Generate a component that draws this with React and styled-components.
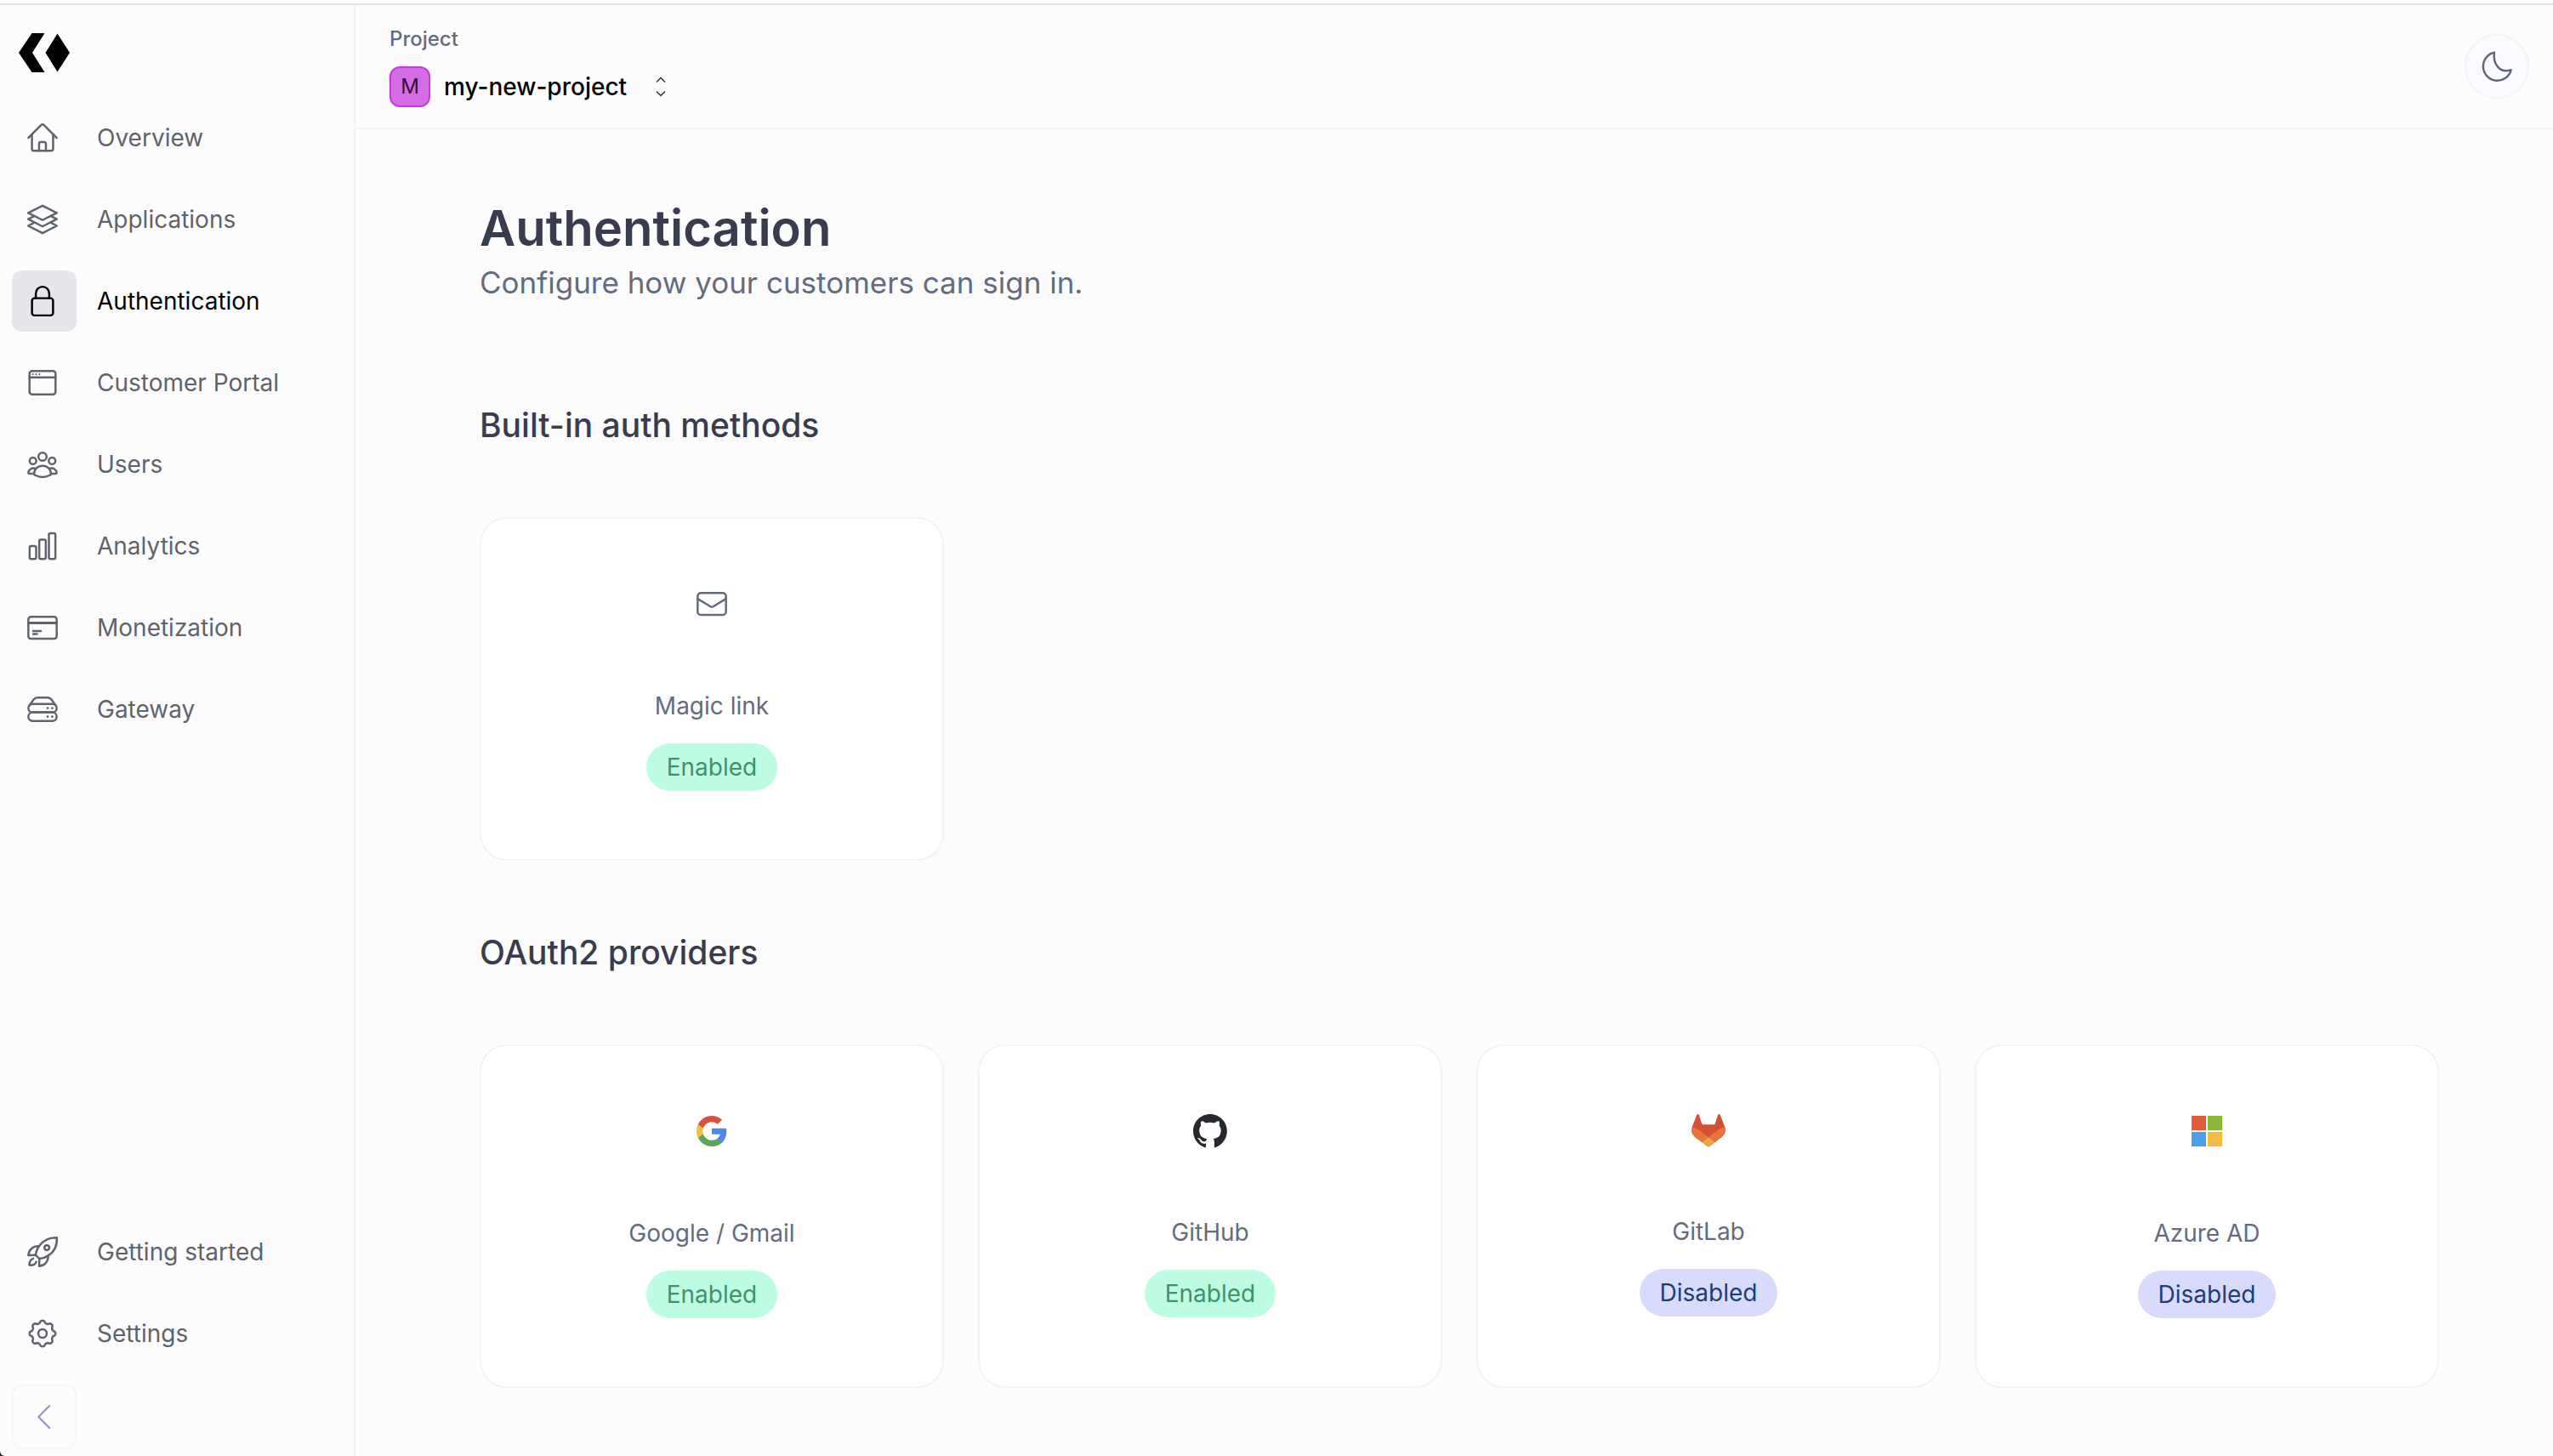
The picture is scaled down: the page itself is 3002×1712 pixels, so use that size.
import React from "react";
import styled, { createGlobalStyle } from "styled-components";

const color = {
  canvas: "#fcfcfc",
  line: "#f2f2f8",
  nav: "#5f636b",
  heading: "#393b4e",
  muted: "#636c7e",
};

const GlobalStyle = createGlobalStyle`
  *, *::before, *::after { box-sizing: border-box; }
  html { background: #1c2b4a; }
  body {
    margin: 0;
    font-family: Inter, "Liberation Sans", sans-serif;
    font-size: 28px;
    line-height: 40px;
  }
  h1, h2, p { margin: 0; }
  button { font: inherit; color: inherit; cursor: pointer; }
  svg { display: block; flex: none; overflow: visible; }
`;

const Window = styled.div`
  display: flex;
  flex-direction: column;
  min-height: 100vh;
  background: ${color.canvas};
  border-bottom-left-radius: 6px;
`;

const WindowEdge = styled.div`
  height: 6px;
  background: #ffffff;
  border-bottom: 2px solid #e0e0e0;
`;

const Shell = styled.div`
  flex: 1;
  display: flex;
`;

const Sidebar = styled.aside`
  flex: none;
  width: 418px;
  display: flex;
  flex-direction: column;
  padding: 32px 14px 8px;
  border-right: 2px solid ${color.line};
`;

const LogoLink = styled.a`
  display: flex;
  align-items: center;
  height: 48px;
  padding: 0 8px;
  margin-bottom: 40px;
  color: #000000;
`;

const Nav = styled.nav`
  display: flex;
  flex-direction: column;
  gap: 24px;
`;

const SidebarFooter = styled.div`
  display: flex;
  flex-direction: column;
  gap: 24px;
  margin-top: auto;
`;

const NavLink = styled.a`
  display: flex;
  align-items: center;
  gap: 24px;
  color: ${(p) => (p.$active ? "#000000" : color.nav)};
  text-decoration: none;
`;

const NavIcon = styled.span`
  display: flex;
  align-items: center;
  justify-content: center;
  width: 76px;
  height: 72px;
  padding-right: 4px;
  border-radius: 12px;
  background: ${(p) => (p.$active ? "#e5e7eb" : "transparent")};
`;

const CollapseButton = styled.button`
  display: flex;
  align-items: center;
  justify-content: center;
  width: 76px;
  height: 76px;
  padding: 0;
  border: 2px solid #f4f4fa;
  border-radius: 12px;
  background: transparent;
  color: #9296c2;
`;

const Main = styled.main`
  flex: 1;
  min-width: 0;
`;

const Header = styled.header`
  display: flex;
  align-items: center;
  justify-content: space-between;
  padding: 24px 28px 24px 40px;
  border-bottom: 2px solid ${color.line};
`;

const ProjectPicker = styled.div`
  display: flex;
  flex-direction: column;
  gap: 16px;
`;

const PickerLabel = styled.span`
  font-size: 24px;
  line-height: 32px;
  font-weight: 500;
  color: ${color.muted};
`;

const PickerButton = styled.button`
  display: flex;
  align-items: center;
  gap: 16px;
  padding: 0;
  border: 0;
  background: transparent;
  font-weight: 500;
  color: #000000;
`;

const Avatar = styled.span`
  display: flex;
  align-items: center;
  justify-content: center;
  width: 48px;
  height: 48px;
  border: 2px solid #c739de;
  border-radius: 12px;
  background: #d56ce6;
  font-size: 24px;
  font-weight: 400;
  color: #34103d;
`;

const PickerName = styled.span`
  padding-right: 16px;
`;

const ThemeButton = styled.button`
  display: flex;
  align-items: center;
  justify-content: center;
  width: 76px;
  height: 76px;
  padding: 0;
  border: 2px solid ${color.line};
  border-radius: 50%;
  background: #fbfaff;
  color: #5f6878;
`;

const Content = styled.div`
  padding: 80px 134px 80px 146px;
`;

const Title = styled.h1`
  font-size: 58px;
  line-height: 72px;
  font-weight: 600;
  color: ${color.heading};
`;

const Subtitle = styled.p`
  margin-bottom: 112px;
  font-size: 35px;
  line-height: 56px;
  color: ${color.muted};
`;

const Section = styled.section`
  & + & {
    margin-top: 80px;
  }
`;

const SectionTitle = styled.h2`
  margin-bottom: 80px;
  font-size: 39px;
  line-height: 56px;
  font-weight: 500;
  color: ${color.heading};
`;

const CardGrid = styled.div`
  display: grid;
  grid-template-columns: repeat(4, 1fr);
  gap: 40px;
`;

const Card = styled.button`
  display: flex;
  flex-direction: column;
  align-items: center;
  justify-content: center;
  height: 404px;
  border: 2px solid ${color.line};
  border-radius: 32px;
  background: #ffffff;
  color: ${color.muted};
`;

const CardIcon = styled.span`
  display: flex;
  align-items: center;
  height: ${(p) => p.$height}px;
  margin-bottom: 80px;
`;

const CardName = styled.span`
  margin-bottom: 24px;
`;

const Badge = styled.span`
  padding: 8px 24px;
  border-radius: 28px;
  background: ${(p) => (p.$enabled ? "#bdfde4" : "#d9dbfc")};
  color: ${(p) => (p.$enabled ? "#40916c" : "#1c3d78")};
`;

function LineIcon({ children, size = 36, width = 1.65 }) {
  return (
    <svg
      width={size}
      height={size}
      viewBox="0 0 24 24"
      fill="none"
      stroke="currentColor"
      strokeWidth={width}
      strokeLinecap="round"
      strokeLinejoin="round"
      aria-hidden="true"
    >
      {children}
    </svg>
  );
}

const Logo = () => (
  <svg width="60" height="46" viewBox="0 0 60 46" fill="currentColor" aria-hidden="true">
    <path d="M0 23 15.500 0h15L16 23l14.500 23h-15Z" />
    <path d="M31.500 23 45.500.500 60 23 45.500 45.500Z" />
  </svg>
);

const HomeIcon = () => (
  <LineIcon>
    <path d="M.9 12.100 11 1.900a1.400 1.400 0 0 1 2 0l10.100 10.200" />
    <path d="M3.700 9.400v11.300a1.500 1.500 0 0 0 1.500 1.500h13.600a1.500 1.500 0 0 0 1.500-1.500V9.400" />
    <path d="M9.300 22.200v-5.400a1.400 1.400 0 0 1 1.400-1.400h2.600a1.400 1.400 0 0 1 1.400 1.400v5.400" />
  </LineIcon>
);

const LayersIcon = () => (
  <LineIcon>
    <path d="M12 1.300 23.200 6.900 12 12.500.8 6.900Z" />
    <path d="M4.800 9.700.8 11.800 12 17.500l11.200-5.700-4-2.100" />
    <path d="M4.800 14.900.8 17 12 22.700 23.200 17l-4-2.100" />
  </LineIcon>
);

const LockIcon = () => (
  <LineIcon>
    <rect x="3.750" y="9.750" width="16.500" height="13.500" rx="2" />
    <path d="M6.750 9.750V6a5.250 5.250 0 0 1 10.500 0v3.750" />
  </LineIcon>
);

const WindowIcon = () => (
  <LineIcon>
    <rect x="1.800" y="2.800" width="20.400" height="18.400" rx="2" />
    <path d="M1.800 7.900h20.400" />
    <g fill="currentColor" stroke="none">
      <circle cx="4.400" cy="5.400" r=".7" />
      <circle cx="7" cy="5.400" r=".7" />
      <circle cx="9.600" cy="5.400" r=".7" />
    </g>
  </LineIcon>
);

const UsersIcon = () => (
  <LineIcon>
    <circle cx="12" cy="6" r="3.200" />
    <circle cx="4.500" cy="9.300" r="2.600" />
    <circle cx="19.500" cy="9.300" r="2.600" />
    <path d="M12 13.100c-3.900 0-6.500 2.600-6.600 6.300 0 .6.300.9.800 1.100 3.600 1.900 8 1.900 11.600 0 .5-.2.800-.5.800-1.100-.1-3.700-2.700-6.300-6.600-6.300Z" />
    <path d="M6.700 15.300C3.500 14.500 1.100 16 .9 18.600c0 .4.200.6.600.6 1.300.2 2.500.2 3.800.1" />
    <path d="M17.300 15.300c3.200-.8 5.600.7 5.800 3.300 0 .4-.2.600-.6.600-1.300.2-2.500.2-3.800.1" />
  </LineIcon>
);

const BarsIcon = () => (
  <LineIcon>
    <rect x="1.900" y="12" width="5.100" height="10.200" rx="1.200" />
    <rect x="9.450" y="7" width="5.100" height="15.200" rx="1.200" />
    <rect x="17" y="2" width="5.100" height="20.200" rx="1.200" />
  </LineIcon>
);

const CreditCardIcon = () => (
  <LineIcon>
    <rect x=".9" y="3.500" width="22.200" height="17.200" rx="2" />
    <path d="M1 8.300h22" strokeWidth="2" />
    <path d="M4.700 14.700h6M4.700 17h3" />
  </LineIcon>
);

const ServerIcon = () => (
  <LineIcon>
    <rect x=".9" y="7.800" width="22.200" height="6.600" rx="3.300" />
    <rect x=".9" y="14.400" width="22.200" height="6.800" rx="3.300" />
    <path d="M1.700 9 5 4.400c.9-1.200 1.700-1.600 3-1.600h8c1.300 0 2.100.4 3 1.600L22.300 9" />
    <g fill="currentColor" stroke="none">
      <circle cx="16" cy="11.100" r=".9" />
      <circle cx="19.600" cy="11.100" r=".9" />
      <circle cx="16" cy="17.800" r=".9" />
      <circle cx="19.600" cy="17.800" r=".9" />
    </g>
  </LineIcon>
);

const RocketIcon = () => (
  <LineIcon>
    <path d="M23.200.8C23.600 6.200 21.500 11.700 16.500 14.900c-2.100 1.400-4.500 2.300-6.900 2.500l-3.100-3c.4-2.600 1.400-5.100 3-7.200C13 2.600 18 .6 23.200.8Z" />
    <circle cx="15.400" cy="8.700" r="1.900" />
    <path d="M9.300 7.500C4.500 7.200 1.300 10.200.9 14.700l5.500-.2" />
    <path d="M16.500 14.900c0 4.700-2.700 7.800-7.100 8.300l.1-5.700" />
    <path d="M4.700 17.200c-2.300.8-3.100 2.600-3 5.200 2.600.2 4.700-.6 5.400-2.700" />
  </LineIcon>
);

const gearOutline = (() => {
  const points = [];
  for (let i = 0; i < 192; i += 1) {
    const angle = (i / 192) * Math.PI * 2;
    const radius = 9.2 + 0.95 * Math.tanh(1.8 * Math.cos(8 * angle));
    points.push(
      `${(12 + radius * Math.cos(angle)).toFixed(2)} ${(12 + radius * Math.sin(angle)).toFixed(2)}`
    );
  }
  return `M${points.join("L")}Z`;
})();

const GearIcon = () => (
  <LineIcon>
    <path d={gearOutline} />
    <circle cx="12" cy="12" r="3.300" />
  </LineIcon>
);

const ChevronLeftIcon = () => (
  <LineIcon size={32}>
    <path d="M16.600 2.300 7 12l9.600 9.700" />
  </LineIcon>
);

const MoonIcon = () => (
  <LineIcon>
    <path d="M10 1.200a11.100 11.100 0 1 0 13.100 13.600C15 17.500 8.600 11 10 1.200Z" />
  </LineIcon>
);

const UpDownIcon = () => (
  <svg width="16" height="24" viewBox="0 0 16 24" fill="none" stroke="#333333" strokeWidth="1.500" aria-hidden="true">
    <path d="m3 6.500 5-5 5 5M3 17.500l5 5 5-5" />
  </svg>
);

const MailIcon = () => (
  <LineIcon>
    <rect x=".9" y="3.500" width="22.200" height="17.200" rx="2.500" />
    <path d="M1 8.100 11 14.200a1.800 1.800 0 0 0 2 0L23 8.100" />
  </LineIcon>
);

const GoogleIcon = () => (
  <svg width="36" height="36" viewBox="1 1 22 22" aria-hidden="true">
    <path fill="#5186ec" d="M22.560 12.250c0-.78-.07-1.530-.2-2.250H12v4.260h5.920c-.26 1.370-1.040 2.530-2.210 3.310v2.770h3.570c2.080-1.920 3.280-4.740 3.280-8.090z" />
    <path fill="#58a55c" d="M12 23c2.970 0 5.460-.98 7.280-2.660l-3.570-2.770c-.98.66-2.230 1.060-3.710 1.060-2.860 0-5.290-1.930-6.160-4.530H2.180v2.840C3.990 20.530 7.700 23 12 23z" />
    <path fill="#f1bf42" d="M5.840 14.090c-.22-.66-.35-1.360-.35-2.090s.13-1.430.35-2.090V7.070H2.180C1.430 8.550 1 10.220 1 12s.43 3.450 1.180 4.930l2.850-2.220.81-.62z" />
    <path fill="#d85140" d="M12 5.380c1.620 0 3.060.56 4.210 1.640l3.150-3.150C17.450 2.090 14.970 1 12 1 7.700 1 3.990 3.470 2.180 7.070l3.660 2.840c.87-2.600 3.300-4.530 6.160-4.530z" />
  </svg>
);

const GitHubIcon = () => (
  <svg width="40" height="40" viewBox="0 0 98 98" aria-hidden="true">
    <path
      fill="#25292e"
      fillRule="evenodd"
      clipRule="evenodd"
      d="M48.854 0C21.839 0 0 22 0 49.217c0 21.756 13.993 40.172 33.405 46.690 2.427.49 3.316-1.059 3.316-2.362 0-1.141-.08-5.052-.08-9.127-13.590 2.934-16.420-5.867-16.420-5.867-2.184-5.704-5.420-7.170-5.420-7.170-4.448-3.015.324-3.015.324-3.015 4.934.326 7.523 5.052 7.523 5.052 4.367 7.496 11.404 5.378 14.235 4.074.404-3.178 1.699-5.378 3.074-6.600-10.839-1.141-22.243-5.378-22.243-24.283 0-5.378 1.940-9.778 5.014-13.200-.485-1.222-2.184-6.275.486-13.038 0 0 4.125-1.304 13.426 5.052a46.970 46.970 0 0 1 12.214-1.630c4.125 0 8.330.571 12.213 1.630 9.302-6.356 13.427-5.052 13.427-5.052 2.670 6.763.970 11.816.485 13.038 3.155 3.422 5.015 7.822 5.015 13.200 0 18.905-11.404 23.060-22.324 24.283 1.780 1.548 3.316 4.481 3.316 9.126 0 6.600-.08 11.897-.08 13.526 0 1.304.890 2.853 3.316 2.364 19.412-6.520 33.405-24.935 33.405-46.691C97.707 22 75.788 0 48.854 0z"
    />
  </svg>
);

const GitLabIcon = () => (
  <svg width="40" height="40" viewBox="0 0 25 25" aria-hidden="true">
    <path fill="#d35036" d="M24.507 9.500l-.034-.09L21.082.562a.896.896 0 0 0-1.694.091l-2.290 7.010H7.825L5.535.653a.898.898 0 0 0-1.694-.09L.451 9.411.416 9.500a6.297 6.297 0 0 0 2.090 7.278l.012.010.030.022 5.160 3.867 2.560 1.935 1.554 1.176a1.051 1.051 0 0 0 1.268 0l1.555-1.176 2.560-1.935 5.197-3.890.014-.010A6.297 6.297 0 0 0 24.507 9.500z" />
    <path fill="#e9743a" d="M24.507 9.500l-.034-.09a11.440 11.440 0 0 0-4.560 2.051l-7.447 5.632 4.742 3.584 5.197-3.890.014-.010A6.297 6.297 0 0 0 24.507 9.500z" />
    <path fill="#eea446" d="M7.707 20.677l2.560 1.935 1.555 1.176a1.051 1.051 0 0 0 1.268 0l1.555-1.176 2.560-1.935-4.743-3.584-4.755 3.584z" />
    <path fill="#e9743a" d="M5.010 11.461a11.430 11.430 0 0 0-4.560-2.050L.416 9.500a6.297 6.297 0 0 0 2.090 7.278l.012.010.030.022 5.160 3.867 4.745-3.584-7.443-5.632z" />
  </svg>
);

const MicrosoftIcon = () => (
  <svg width="38" height="38" viewBox="0 0 38 38" aria-hidden="true">
    <rect width="38" height="38" fill="#f8f8f8" />
    <rect x="1" y="1" width="17" height="17" fill="#e05c35" />
    <rect x="20" y="1" width="17" height="17" fill="#8bb737" />
    <rect x="1" y="20" width="17" height="17" fill="#4b9fe9" />
    <rect x="20" y="20" width="17" height="17" fill="#f4bc42" />
  </svg>
);

const primaryLinks = [
  { label: "Overview", icon: HomeIcon },
  { label: "Applications", icon: LayersIcon },
  { label: "Authentication", icon: LockIcon, active: true },
  { label: "Customer Portal", icon: WindowIcon },
  { label: "Users", icon: UsersIcon },
  { label: "Analytics", icon: BarsIcon },
  { label: "Monetization", icon: CreditCardIcon },
  { label: "Gateway", icon: ServerIcon },
];

const secondaryLinks = [
  { label: "Getting started", icon: RocketIcon },
  { label: "Settings", icon: GearIcon },
];

const sections = [
  {
    title: "Built-in auth methods",
    methods: [{ name: "Magic link", icon: MailIcon, iconHeight: 40, enabled: true }],
  },
  {
    title: "OAuth2 providers",
    methods: [
      { name: "Google / Gmail", icon: GoogleIcon, iconHeight: 40, enabled: true },
      { name: "GitHub", icon: GitHubIcon, iconHeight: 38, enabled: true },
      { name: "GitLab", icon: GitLabIcon, iconHeight: 36, enabled: false },
      { name: "Azure AD", icon: MicrosoftIcon, iconHeight: 40, enabled: false },
    ],
  },
];

function NavItem({ label, icon: Icon, active }) {
  return (
    <NavLink href="#" $active={active} aria-current={active ? "page" : undefined}>
      <NavIcon $active={active}>
        <Icon />
      </NavIcon>
      {label}
    </NavLink>
  );
}

function MethodCard({ name, icon: Icon, iconHeight, enabled }) {
  return (
    <Card type="button">
      <CardIcon $height={iconHeight}>
        <Icon />
      </CardIcon>
      <CardName>{name}</CardName>
      <Badge $enabled={enabled}>{enabled ? "Enabled" : "Disabled"}</Badge>
    </Card>
  );
}

export default function App() {
  return (
    <Window>
      <GlobalStyle />
      <WindowEdge />
      <Shell>
        <Sidebar>
          <LogoLink href="#" aria-label="Home">
            <Logo />
          </LogoLink>
          <Nav>
            {primaryLinks.map((link) => (
              <NavItem key={link.label} {...link} />
            ))}
          </Nav>
          <SidebarFooter>
            {secondaryLinks.map((link) => (
              <NavItem key={link.label} {...link} />
            ))}
            <CollapseButton type="button" aria-label="Collapse sidebar">
              <ChevronLeftIcon />
            </CollapseButton>
          </SidebarFooter>
        </Sidebar>
        <Main>
          <Header>
            <ProjectPicker>
              <PickerLabel id="project-label">Project</PickerLabel>
              <PickerButton type="button" aria-describedby="project-label">
                <Avatar>M</Avatar>
                <PickerName>my-new-project</PickerName>
                <UpDownIcon />
              </PickerButton>
            </ProjectPicker>
            <ThemeButton type="button" aria-label="Switch to dark theme">
              <MoonIcon />
            </ThemeButton>
          </Header>
          <Content>
            <Title>Authentication</Title>
            <Subtitle>Configure how your customers can sign in.</Subtitle>
            {sections.map((section) => (
              <Section key={section.title}>
                <SectionTitle>{section.title}</SectionTitle>
                <CardGrid>
                  {section.methods.map((method) => (
                    <MethodCard key={method.name} {...method} />
                  ))}
                </CardGrid>
              </Section>
            ))}
          </Content>
        </Main>
      </Shell>
    </Window>
  );
}
